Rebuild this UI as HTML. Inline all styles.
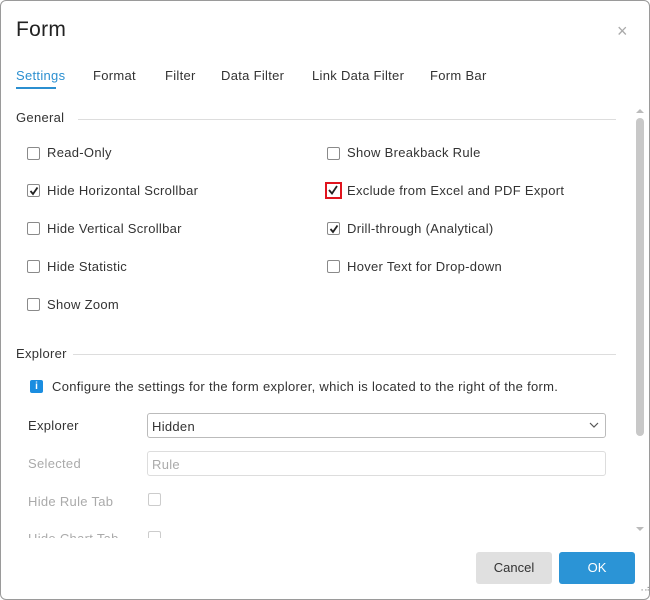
<!DOCTYPE html>
<html><head><style>
*{box-sizing:border-box;margin:0;padding:0}
body{width:650px;height:600px;background:#fff;font-family:"Liberation Sans",sans-serif;color:#333;position:relative;overflow:hidden}
.dlg{position:absolute;left:0;top:0;width:650px;height:600px;border:1px solid #9a9a9a;border-radius:6px;background:#fff}
.a{position:absolute;white-space:nowrap;letter-spacing:0.3px}
.cb{position:absolute;width:13px;height:13px;border:1px solid #8a8a8a;border-radius:2px;background:#fff}
.cb svg{position:absolute;left:1px;top:1px}
.lbl{font-size:13px;color:#333}
.line{position:absolute;height:1px;background:#ddd}
.dis{color:#aaa}
</style></head><body>
<div class="dlg">
<div class="a" style="left:15px;top:17px;font-size:21px;color:#222">Form</div>
<div class="a" style="left:616px;top:20px;font-size:18px;color:#aaa">×</div>
<div class="a" style="left:15px;top:67px;font-size:13px;color:#2b8fd0">Settings</div>
<div style="position:absolute;left:15px;top:86px;width:40px;height:2px;background:#2b8fd0"></div>
<div class="a lbl" style="left:92px;top:67px">Format</div>
<div class="a lbl" style="left:164px;top:67px">Filter</div>
<div class="a lbl" style="left:220px;top:67px">Data Filter</div>
<div class="a lbl" style="left:311px;top:67px">Link Data Filter</div>
<div class="a lbl" style="left:429px;top:67px">Form Bar</div>

<div style="position:absolute;left:0;top:98px;width:650px;height:439px;overflow:hidden">
<div class="a lbl" style="left:15px;top:11px">General</div>
<div class="line" style="left:77px;top:20px;width:538px"></div>
<div class="cb" style="left:26px;top:48px"></div><div class="a lbl" style="left:46px;top:46px">Read-Only</div>
<div class="cb" style="left:26px;top:85px"><svg width="10" height="10"><path d="M1.5 5 L4 8 L8.5 1.5" stroke="#222" stroke-width="1.8" fill="none"/></svg></div><div class="a lbl" style="left:46px;top:84px">Hide Horizontal Scrollbar</div>
<div class="cb" style="left:26px;top:123px"></div><div class="a lbl" style="left:46px;top:122px">Hide Vertical Scrollbar</div>
<div class="cb" style="left:26px;top:161px"></div><div class="a lbl" style="left:46px;top:160px">Hide Statistic</div>
<div class="cb" style="left:26px;top:199px"></div><div class="a lbl" style="left:46px;top:198px">Show Zoom</div>
<div class="cb" style="left:326px;top:48px"></div><div class="a lbl" style="left:346px;top:46px">Show Breakback Rule</div>
<div class="cb" style="left:324px;top:83px;width:17px;height:17px;border:2px solid #e0141e;border-radius:0"><svg width="12" height="12" style="left:0;top:0"><path d="M2 6 L5 9.5 L10 2" stroke="#222" stroke-width="1.8" fill="none"/></svg></div><div class="a lbl" style="left:346px;top:84px">Exclude from Excel and PDF Export</div>
<div class="cb" style="left:326px;top:123px"><svg width="10" height="10"><path d="M1.5 5 L4 8 L8.5 1.5" stroke="#222" stroke-width="1.8" fill="none"/></svg></div><div class="a lbl" style="left:346px;top:122px">Drill-through (Analytical)</div>
<div class="cb" style="left:326px;top:161px"></div><div class="a lbl" style="left:346px;top:160px">Hover Text for Drop-down</div>

<div class="a lbl" style="left:15px;top:247px">Explorer</div>
<div class="line" style="left:72px;top:255px;width:543px"></div>
<div style="position:absolute;left:29px;top:281px;width:13px;height:13px;background:#1a8de0;border-radius:2px;color:#fff;font-size:10px;font-weight:bold;text-align:center;line-height:13px">i</div>
<div class="a lbl" style="left:51px;top:280px">Configure the settings for the form explorer, which is located to the right of the form.</div>
<div class="a lbl" style="left:27px;top:319px">Explorer</div>
<div style="position:absolute;left:146px;top:314px;width:459px;height:25px;border:1px solid #bbb;border-radius:3px"></div>
<div class="a lbl" style="left:151px;top:320px">Hidden</div>
<svg style="position:absolute;left:588px;top:322px" width="10" height="8"><path d="M1 2 L5 6 L9 2" stroke="#555" stroke-width="1.2" fill="none"/></svg>
<div class="a lbl dis" style="left:27px;top:357px">Selected</div>
<div style="position:absolute;left:146px;top:352px;width:459px;height:25px;border:1px solid #ddd;border-radius:3px"></div>
<div class="a lbl dis" style="left:151px;top:358px">Rule</div>
<div class="a lbl dis" style="left:27px;top:395px">Hide Rule Tab</div>
<div class="cb" style="left:147px;top:394px;border-color:#ccc"></div>
<div class="a lbl dis" style="left:27px;top:432px">Hide Chart Tab</div>
<div class="cb" style="left:147px;top:432px;border-color:#ccc"></div>
</div>

<svg style="position:absolute;left:634px;top:106px" width="10" height="8"><path d="M1 6 L5 2 L9 6Z" fill="#bbb"/></svg>
<div style="position:absolute;left:635px;top:117px;width:8px;height:318px;background:#c8c8c8;border-radius:4px"></div>
<svg style="position:absolute;left:634px;top:524px" width="10" height="8"><path d="M1 2 L5 6 L9 2Z" fill="#bbb"/></svg>

<div style="position:absolute;left:475px;top:551px;width:76px;height:32px;background:#e0e0e0;border-radius:3px;font-size:13px;color:#333;text-align:center;line-height:32px">Cancel</div>
<div style="position:absolute;left:558px;top:551px;width:76px;height:32px;background:#2b94d6;border-radius:3px;font-size:13px;color:#fff;text-align:center;line-height:32px">OK</div>
<div class="a" style="left:637px;top:584px;font-size:8px;color:#888;line-height:8px">⠠⠴</div>
</div>
</body></html>
